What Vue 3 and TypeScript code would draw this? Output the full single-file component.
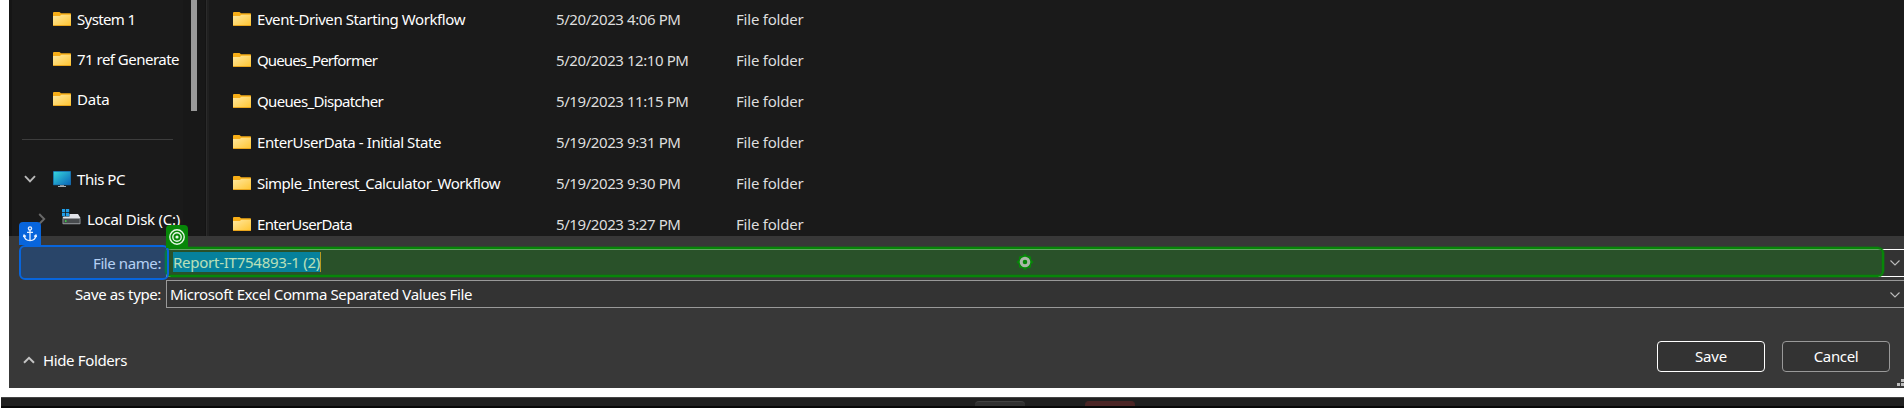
<script setup lang="ts">
interface NavItem { label: string; width: number }
interface FileRow { name: string; width: number; date: string; dateWidth: number }

const folders: NavItem[] = [
  { label: 'System 1', width: 58.5 },
  { label: '71 ref Generate', width: 102 },
  { label: 'Data', width: 32.5 },
]

const files: FileRow[] = [
  { name: 'Event-Driven Starting Workflow', width: 208, date: '5/20/2023 4:06 PM', dateWidth: 124.5 },
  { name: 'Queues_Performer', width: 120, date: '5/20/2023 12:10 PM', dateWidth: 132.5 },
  { name: 'Queues_Dispatcher', width: 126, date: '5/19/2023 11:15 PM', dateWidth: 132.5 },
  { name: 'EnterUserData - Initial State', width: 184, date: '5/19/2023 9:31 PM', dateWidth: 124.5 },
  { name: 'Simple_Interest_Calculator_Workflow', width: 243, date: '5/19/2023 9:30 PM', dateWidth: 124.5 },
  { name: 'EnterUserData', width: 95, date: '5/19/2023 3:27 PM', dateWidth: 124.5 },
]

// Spreads a label over the given advance width through letter-spacing.
const vFit = {
  mounted(el: HTMLElement, binding: { value: number }) {
    const count = (el.textContent ?? '').length
    const natural = el.getBoundingClientRect().width
    el.style.letterSpacing = `${(binding.value - natural) / count}px`
  },
}
</script>

<template>
  <div class="screen">
    <svg class="defs" width="0" height="0" aria-hidden="true">
      <defs>
        <linearGradient id="front" x1="0" y1="0" x2="1" y2="1">
          <stop offset="0" stop-color="#ffe8a0" />
          <stop offset="1" stop-color="#ffc634" />
        </linearGradient>
        <linearGradient id="display" x1="0" y1="0" x2="1" y2="1">
          <stop offset="0" stop-color="#35d5dc" />
          <stop offset="1" stop-color="#0b66b8" />
        </linearGradient>
        <symbol id="folder" viewBox="0 0 18 14">
          <path d="M0 1Q0 0 1 0H6.5L8 1.3H17.3Q18 1.3 18 2V12H0Z" fill="#f8ae16" />
          <path d="M0 4H6.8L8.4 2.7H18V13.2H0Z" fill="url(#front)" />
          <path d="M0 13H18V13.4Q18 14 17.4 14H.6Q0 14 0 13.4Z" fill="#e9a51c" />
        </symbol>
      </defs>
    </svg>

    <main class="dialog">
      <div class="browser">
        <nav class="nav">
          <div v-for="item in folders" :key="item.label" class="nav-row">
            <svg class="folder"><use href="#folder" /></svg>
            <span v-fit="item.width" class="t">{{ item.label }}</span>
          </div>
          <hr class="rule" />
          <div class="nav-row pc">
            <svg class="chev" width="12" height="8" viewBox="0 0 12 8"><path d="M1 1.2 6 6.4 11 1.2" fill="none" stroke="#b8b8b8" stroke-width="1.9" /></svg>
            <svg width="18" height="16" viewBox="0 0 18 16">
              <rect width="18" height="14.2" rx=".6" fill="#1769a6" />
              <rect x=".8" y=".8" width="16.4" height="12.8" fill="url(#display)" />
              <path d="M7 14.2H11V15H13V16H5V15H7Z" fill="#a9b0b5" />
            </svg>
            <span v-fit="48" class="t">This PC</span>
          </div>
          <div class="nav-row disk">
            <svg class="chev" width="8" height="12" viewBox="0 0 8 12"><path d="M1.2 1 6.2 6 1.2 11" fill="none" stroke="#686868" stroke-width="1.9" /></svg>
            <svg class="drive" width="19" height="16" viewBox="0 0 19 16">
              <path d="M3 5H16L18.5 9H.5Z" fill="#e1e3e8" />
              <rect x=".5" y="9" width="18" height="6.2" rx=".8" fill="#94979b" />
              <rect x="1.4" y="10" width="16.2" height="4.2" fill="#484b4e" />
              <rect x="3" y="11.3" width="1.5" height="1.5" fill="#3bea45" />
              <rect width="7.5" height="7.5" fill="#1a1a1a" />
              <path d="M0 0H3.2V3.2H0ZM4 0H7.2V3.2H4ZM0 4H3.2V7.2H0ZM4 4H7.2V7.2H4Z" fill="#209ce6" />
            </svg>
            <span v-fit="93" class="t">Local Disk (C:)</span>
          </div>
        </nav>
        <div class="scroll"><div class="thumb" /></div>
        <div class="split" />
        <section class="files">
          <div v-for="f in files" :key="f.name" class="file-row">
            <svg class="folder"><use href="#folder" /></svg>
            <div class="name"><span v-fit="f.width" class="t">{{ f.name }}</span></div>
            <div class="date"><span v-fit="f.dateWidth" class="t">{{ f.date }}</span></div>
            <div class="type"><span v-fit="67.5" class="t">File folder</span></div>
          </div>
        </section>
      </div>

      <footer class="footer">
        <div class="field first">
          <label class="label"><span v-fit="68" class="t">File name:</span></label>
          <div class="combo active">
            <span class="selection"><span v-fit="147" class="t">Report-IT754893-1 (2)</span></span>
            <svg class="drop" width="10" height="6" viewBox="0 0 10 6"><path d="M.5.5 5 5 9.5.5" fill="none" stroke="#bcbcbc" stroke-width="1.1" /></svg>
          </div>
        </div>
        <div class="field">
          <label class="label"><span v-fit="86" class="t">Save as type:</span></label>
          <div class="combo">
            <span v-fit="302" class="t">Microsoft Excel Comma Separated Values File</span>
            <svg class="drop" width="10" height="6" viewBox="0 0 10 6"><path d="M.5.5 5 5 9.5.5" fill="none" stroke="#bcbcbc" stroke-width="1.1" /></svg>
          </div>
        </div>
        <div class="actions">
          <div class="hide">
            <svg width="12" height="8" viewBox="0 0 12 8"><path d="M1 6.8 6 1.8 11 6.8" fill="none" stroke="#c4c4c4" stroke-width="2" /></svg>
            <span v-fit="84" class="t">Hide Folders</span>
          </div>
          <button class="btn primary"><span v-fit="32" class="t">Save</span></button>
          <button class="btn"><span v-fit="44.5" class="t">Cancel</span></button>
        </div>

        <div class="mark target" />
        <div class="mark anchor" />
        <div class="badge anchor-badge">
          <svg width="14" height="16" viewBox="0 0 14 16" fill="none" stroke="#e8f1ff" stroke-width="1.3">
            <circle cx="7" cy="2.4" r="1.6" />
            <path d="M7 4V14.6M4 6.4H10M1.1 9.2Q1.6 14.6 7 14.6 12.4 14.6 12.9 9.2M.2 11 1.1 9 2.9 10.4M13.8 11 12.9 9 11.1 10.4" />
          </svg>
        </div>
        <div class="badge target-badge">
          <svg width="16" height="16" viewBox="0 0 16 16" fill="none" stroke="#e6f7e6" stroke-width="1.4">
            <circle cx="8" cy="8" r="7.2" /><circle cx="8" cy="8" r="4.2" />
            <circle cx="8" cy="8" r="1.6" fill="#e6f7e6" stroke="none" />
          </svg>
        </div>
        <svg class="pin" width="18" height="18" viewBox="0 0 18 18">
          <path d="M9 .5 11.5 3H14L15 4V6.5L17.5 9 15 11.5V14L14 15H11.5L9 17.5 6.5 15H4L3 14V11.5L.5 9 3 6.5V4L4 3H6.5Z" fill="#078608" />
          <circle cx="9" cy="9" r="3.8" fill="none" stroke="#a9b8a7" stroke-width="3" />
        </svg>
        <svg class="grip" width="7" height="7" viewBox="0 0 7 7"><path d="M4 0H7V3H4ZM0 4H3V7H0ZM4 4H7V7H4Z" fill="#bdbdbd" /></svg>
      </footer>
    </main>

    <div class="taskbar"><i class="tab" /><i class="tab red" /></div>
  </div>
</template>

<style>
body { margin: 0; overflow: hidden; background: #fff; }
</style>

<style scoped>
.screen { width: 1904px; height: 408px; overflow: hidden; background: #fff; font: 15px/20px "Noto Sans", "Open Sans", sans-serif; color: #fff; }
.screen * { box-sizing: border-box; }
svg { display: block; flex: none; }
.defs { position: absolute; }
.t { display: inline-block; white-space: pre; flex: none; }
.dialog { margin-left: 9px; height: 388px; }
.browser { display: flex; height: 236px; overflow: hidden; background: #1a1a1a; border-left: 3px solid #151515; }
.nav { width: 171px; flex: none; }
.nav-row { display: flex; align-items: center; gap: 6px; height: 40px; padding-left: 41px; }
.nav-row .t { margin-top: -2px; }
.folder { width: 18px; height: 14px; margin-top: -2px; }
.rule { width: 151px; height: 1px; margin: 19px 0 20px 10px; border: 0; background: #3d3d3d; }
.pc { padding-left: 12px; }
.pc .chev { margin-right: 11px; margin-top: -2px; }
.pc svg + svg { margin-top: -3px; }
.disk { padding-left: 26px; }
.disk .chev { margin-right: 10px; margin-top: -2px; }
.disk .drive { margin: -6px 0 0 0; }
.scroll { width: 22px; flex: none; padding-left: 8px; background: #181818; }
.thumb { width: 6px; height: 111px; background: #999; }
.split { width: 4px; flex: none; background: #202020; border-left: 1px solid #141414; box-shadow: inset 1px 0 #2b2b2b; }
.files { flex: 1; padding-left: 24px; }
.file-row { display: flex; align-items: center; height: 41px; }
.file-row .folder { margin-top: -4px; }
.file-row > div { height: 20px; margin-top: -3px; }
.name { width: 299px; margin-left: 6px; }
.date { width: 180px; }
.date, .type { color: #dedede; }
.footer { position: relative; height: 152px; padding-top: 13px; background: #383838; }
.field { display: flex; height: 28px; margin-bottom: 3px; }
.label { width: 157px; padding: 4px 5px 0 0; text-align: right; }
.combo { display: flex; flex: 1; align-items: center; justify-content: space-between; height: 28px; padding: 0 4px 0 3px; background: #333; border: 1px solid #999; border-right: 0; }
.combo.active { padding-bottom: 2px; border-color: #fff; }
.drop { margin-top: 1px; }
.selection { height: 20px; margin-left: 3px; line-height: 20px; background: #0078d7; color: #fff; border-right: 1px solid #ff9a28; }
.actions { display: flex; align-items: center; height: 31px; margin-top: 33px; padding-right: 14px; }
.hide { display: flex; flex: 1; align-items: center; gap: 8px; padding: 6px 0 0 14px; }
.hide svg { margin-top: 1px; }
.btn { width: 108px; height: 31px; margin-left: 17px; padding: 0 0 1px; border: 1px solid #999; border-radius: 4px; background: #333; color: #fff; font: inherit; }
.btn.primary { border-color: #fff; }
.mark { position: absolute; border-radius: 6px; }
.target { left: 156px; top: 11px; width: 1719px; height: 30px; border: 2px solid #078608; background: rgba(20, 152, 20, .3); box-shadow: 0 0 0 .5px #146a16, inset 0 0 0 .5px #146a16; }
.anchor { left: 10px; top: 9px; width: 150px; height: 35px; border: 2px solid #0865dc; background: rgba(8, 101, 220, .3); }
.badge { position: absolute; display: grid; place-items: center; width: 22px; height: 23px; border-radius: 4px 4px 0 0; }
.anchor-badge { left: 10px; top: -14px; background: #0865dc; }
.target-badge { left: 157px; top: -11px; background: #078608; }
.pin { position: absolute; left: 1007px; top: 17px; }
.grip { position: absolute; right: 0; top: 143px; }
.taskbar { display: flex; height: 11px; margin: 9px 0 0 1px; padding: 4px 0 0 974px; gap: 60px; background: linear-gradient(#454545 1px, #202020 1px 9px, #080808 9px); }
.tab { width: 50px; height: 5px; border-radius: 4px 4px 0 0; background: #303030; border-top: 1px solid #424242; }
.tab.red { background: #4b2525; border-color: #4b2525; }
</style>
